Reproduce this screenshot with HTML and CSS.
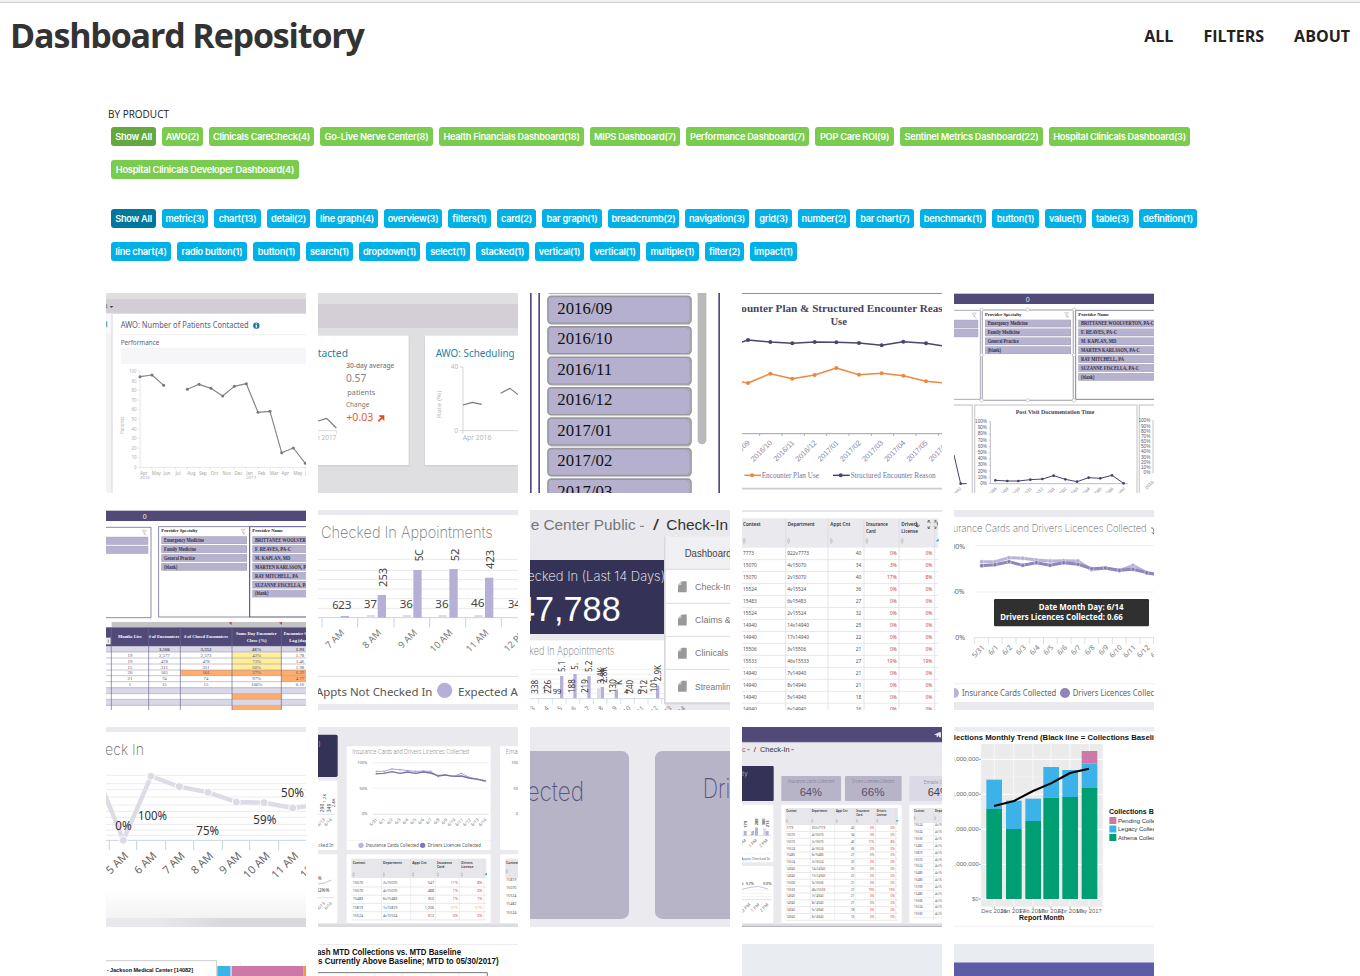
FILE: index.html
```html
<!DOCTYPE html>
<html lang="en">
<head>
<meta charset="utf-8">
<title>Dashboard Repository</title>
<link rel="stylesheet" href="styles.css">
</head>
<body>
<header class="site-header">
  <h1 class="site-title">Dashboard Repository</h1>
  <nav class="site-nav">
    <a class="nav-all">ALL</a>
    <a class="nav-filters">FILTERS</a>
    <a class="nav-about">ABOUT</a>
  </nav>
</header>
<main class="content">
  <h2 class="filter-heading">BY PRODUCT</h2>
  <div class="tags tags-product" id="products"></div>
  <div class="tags tags-component" id="components"></div>
  <section class="gallery" id="gallery"></section>
</main>
<script src="script.js"></script>
</body>
</html>
```

FILE: styles.css
```css
* { box-sizing: border-box; }
body {
  margin: 0;
  height: 976px;
  overflow: hidden;
  background: #fff;
  border-top: 2px solid #f1f1f1;
  font-family: "Open Sans", sans-serif;
  color: #333;
}
.site-header {
  display: flex;
  justify-content: space-between;
  align-items: center;
  height: 66px;
  padding: 0 10px 2px;
  border-top: 1px solid #cfcfcf;
}
.site-title {
  margin: 0;
  font-size: 34px;
  font-weight: 700;
  line-height: 46px;
  letter-spacing: -1.15px;
  color: #333;
}
.site-nav { display: flex; gap: 30px; padding-top: 2px; }
.site-nav a { font-size: 16px; font-weight: 700; line-height: 22px; color: #222; white-space: nowrap; }
.content { padding: 39px 0 0 106px; }
.filter-heading {
  margin: 0 0 6px 2px;
  font-size: 10px;
  line-height: 14px;
  font-weight: 400;
  color: #222;
}
.tags {
  display: flex;
  flex-wrap: wrap;
  gap: 14px 6px;
  width: 1100px;
  padding-left: 5px;
}
.tag {
  display: flex;
  justify-content: center;
  height: 19px;
  border-radius: 3px;
  font: 600 9.2px/19px Inter, sans-serif;
  letter-spacing: -0.24px;
  color: #fff;
  white-space: nowrap;
}
.tags-product .tag { background: #79cc4e; }
.tags-product .tag.active { background: #63a93f; }
.tags-component { margin-top: 30px; }
.tags-component .tag { background: #00b1e7; }
.tags-component .tag.active { background: #00789d; }
.gallery {
  display: grid;
  grid-template-columns: repeat(5, 200px);
  gap: 17px 12px;
  margin-top: 32px;
}
.thumb { display: block; width: 200px; height: 200px; }
.noto { font-family: "Noto Sans", sans-serif; }
.open { font-family: "Open Sans", sans-serif; }
.serif { font-family: "Liberation Serif", serif; }
.helv { font-family: "Liberation Sans", sans-serif; }
.thin { font-family: Inter, sans-serif; font-weight: 200; }
```

FILE: script.js
```js
const products = [
  ["Show All", 45], ["AWO(2)", 41], ["Clinicals CareCheck(4)", 105], ["Go-Live Nerve Center(8)", 113],
  ["Health Financials Dashboard(18)", 145], ["MIPS Dashboard(7)", 90], ["Performance Dashboard(7)", 123],
  ["POP Care ROI(9)", 79], ["Sentinel Metrics Dashboard(22)", 143], ["Hospital Clinicals Dashboard(3)", 141],
  ["Hospital Clinicals Developer Dashboard(4)", 188]
];
const components = [
  ["Show All", 45], ["metric(3)", 46], ["chart(13)", 47], ["detail(2)", 43], ["line graph(4)", 62], ["overview(3)", 58],
  ["filters(1)", 43], ["card(2)", 39], ["bar graph(1)", 60], ["breadcrumb(2)", 71], ["navigation(3)", 64], ["grid(3)", 37],
  ["number(2)", 52], ["bar chart(7)", 58], ["benchmark(1)", 66], ["button(1)", 47], ["value(1)", 41], ["table(3)", 41],
  ["definition(1)", 58], ["line chart(4)", 60], ["radio button(1)", 70], ["button(1)", 47], ["search(1)", 47],
  ["dropdown(1)", 61], ["select(1)", 44], ["stacked(1)", 53], ["vertical(1)", 49], ["vertical(1)", 50],
  ["multiple(1)", 53], ["filter(2)", 39], ["impact(1)", 47]
];
const tags = list => list.map(([label, width], i) =>
  `<a class="tag${i ? "" : " active"}" style="width:${width}px">${label}</a>`).join("");
document.getElementById("products").innerHTML = tags(products);
document.getElementById("components").innerHTML = tags(components);

/* SVG drawing helpers; every thumbnail uses 3 units per pixel */
const rect = (x, y, w, h, fill, extra = "") => `<rect x="${x}" y="${y}" width="${w}" height="${h}" fill="${fill}" ${extra}/>`;
const line = (pts, stroke, w = 3) => `<polyline points="${pts}" fill="none" stroke="${stroke}" stroke-width="${w}" stroke-linejoin="round"/>`;
const dots = (pts, r, fill, extra = "") => pts.split(" ").map(p => {
  const [x, y] = p.split(",");
  return `<circle cx="${x}" cy="${y}" r="${r}" fill="${fill}" ${extra}/>`;
}).join("");
const text = (x, y, s, size, fill, font, o = {}) =>
  `<text class="${font}" x="${x}" y="${y}" font-size="${size}" fill="${fill}"` +
  (o.b ? ` font-weight="${o.b}"` : "") +
  (o.w ? ` textLength="${o.w}" lengthAdjust="spacingAndGlyphs"` : "") +
  (o.a ? ` text-anchor="${o.a}"` : "") +
  (o.r ? ` transform="rotate(${o.r} ${x} ${y})"` : "") +
  `>${s.replace(/&/g, "&amp;")}</text>`;
const hlines = (x1, x2, ys, c, w = 2) => ys.map(y => line(`${x1},${y} ${x2},${y}`, c, w)).join("");
const vlines = (xs, y1, y2, c, w = 2) => xs.map(x => line(`${x},${y1} ${x},${y2}`, c, w)).join("");
const range = (n, f) => Array.from({ length: n }, (_, i) => f(i)).join("");
const thumb = (x, y, bg, body) =>
  `<svg class="thumb" viewBox="${x} ${y} 600 600">${rect(x, y, 600, 600, bg)}${body}</svg>`;

function patientsContacted() {
  const a = "120,275 156,270 191,301";
  const b = "262,313 297,298 333,310 368,333 403,304 439,296 474,382 510,379 545,503 580,489 616,535";
  const months = ["Apr", "May", "Jun", "Jul", "Aug", "Sep", "Oct", "Nov", "Dec", "Jan", "Feb", "Mar", "Apr", "May", "J"];
  return thumb(18, 24, "#fff",
    rect(18, 24, 600, 18, "#dfdfdf") + rect(18, 42, 600, 44, "#d3cdd6") +
    rect(18, 86, 17, 538, "#f3f2f5") + rect(18, 86, 17, 60, "#f8f8fa") + rect(34, 86, 4, 538, "#e0dfe3") +
    rect(18, 109, 4, 18, "#75a8c0") + rect(18, 58, 4, 12, "#99929f") +
    `<path d="M29 63h11l-5.500 6z" fill="#443f55"/>` +
    text(62, 130, "AWO: Number of Patients Contacted", 25, "#625d78", "noto", { w: 384 }) +
    `<circle cx="469" cy="122" r="9.500" fill="#24789c"/>` + rect(467, 120, 4, 8, "#fff") + rect(467, 115, 4, 3, "#fff") +
    hlines(62, 618, [149], "#e5e5e8", 2) + text(62, 179, "Performance", 21, "#625d78", "noto", { w: 116 }) +
    rect(62, 188, 556, 49, "#f6f6f8") + line("120,259 120,547 618,547", "#ddd", 2) +
    range(11, i => text(110, 552 - i * 28.8, String(i * 10), 13.5, "#b0b0b0", "noto", { a: "end" }) +
      line(`114,${547 - i * 28.8} 120,${547 - i * 28.8}`, "#ddd", 2)) +
    text(73, 447, "Patients", 13.5, "#aaa", "noto", { r: -90, w: 52 }) +
    months.map((m, i) => text(120 + i * 35.4, 570, m, 13.5, "#a5a5a5", "noto") + line(`${120 + i * 35.4},547 ${120 + i * 35.4},553`, "#ddd", 2)).join("") +
    text(120, 581, "2016", 13, "#a5a5a5", "noto", { w: 30 }) + text(439, 581, "2017", 13, "#a5a5a5", "noto", { w: 30 }) +
    line(a, "#85858a", 3.5) + line(b, "#85858a", 3.5) + dots(a + " " + b, 4.5, "#77777c"));
}

function awoCards() {
  return thumb(18, 24, "#dfdfe1",
    rect(18, 57, 600, 72, "#d4ced6") + rect(18, 155, 275, 389, "#d0d0d2") + rect(337, 155, 281, 389, "#d0d0d2") +
    rect(18, 152, 272, 388, "#fff") + rect(339, 152, 279, 388, "#fff") +
    text(17, 215, "tacted", 31, "#27819f", "noto", { w: 91 }) +
    text(103, 250, "30-day average", 20, "#77777b", "noto", { w: 144, b: 500 }) +
    text(102, 291, "0.57", 33, "#85858a", "noto", { w: 61 }) +
    text(106, 330, "patients", 21, "#77777b", "noto", { w: 84 }) +
    text(102, 366, "Change", 20, "#77777b", "noto", { w: 70 }) +
    text(103, 409, "+0.03", 32, "#e75d39", "noto", { w: 81 }) +
    line("199,409 213,395", "#d94e28", 5) + `<path d="M201 391h16v17l-6-5v-7h-8z" fill="#d94e28"/>` +
    line("18,408 44,400 73,429", "#77777b", 3.5) + line("18,437 74,437 74,446", "#d5d5d5", 2.5) +
    text(73, 466, "n 2017", 19.500, "#b5b5b7", "noto", { a: "end" }) +
    text(371, 215, "AWO: Scheduling", 31, "#27819f", "noto", { w: 237 }) +
    text(439, 252, "40", 20, "#b9b9bb", "noto", { a: "end" }) + text(438, 444, "0", 20, "#b9b9bb", "noto", { a: "end" }) +
    text(388, 400, "Rate (%)", 18.500, "#b9b9bb", "noto", { r: -90, w: 83 }) +
    line("443,246 453,246 453,446", "#d5d5d5") + line("443,437 618,437", "#d5d5d5") +
    text(452, 466, "Apr 2016", 19.500, "#b5b5b7", "noto", { w: 86 }) +
    line("453,360 481,352 509,358", "#77777b", 3.5) + line("566,325 594,310 618,329", "#77777b", 3.5));
}

function monthSlicer() {
  const m = ["2016/09", "2016/10", "2016/11", "2016/12", "2017/01", "2017/02", "2017/03"];
  return thumb(18, 24, "#fff",
    rect(18, 24, 5, 600, "#514a7d") + rect(43, 24, 5, 600, "#514a7d") + rect(583, 24, 5, 600, "#514a7d") +
    line("74,26 500,26", "#aaa", 3) +
    m.map((s, i) => rect(72, 34 + i * 91.4, 429, 81, "#b5b0ce", 'rx="10" stroke="#98979e" stroke-width="5"') +
      line(`80,${118 + i * 91.4} 498,${118 + i * 91.4}`, "#c8c8c8", 3) +
      `<path d="M488 ${37 + i * 91.4}l10 9v58l-9 9" fill="none" stroke="#aaa8ae" stroke-width="4"/>` +
      text(100, 87 + i * 91.4, s, 50, "#111", "serif", { w: 165 })).join("") +
    rect(521, 0, 26, 478, "#b9b9b9", 'rx="13"'));
}

function encounterPlan() {
  const p = "672,165 739,171 805,175 872,171 937,172 1005,174 1073,181 1138,170 1206,175";
  const o = "672,294 739,266 805,281 872,270 937,249 1005,269 1073,265 1138,272 1206,289";
  const d = ["2016/09", "2016/10", "2016/11", "2016/12", "2017/01", "2017/02", "2017/03", "2017/04", "2017/05", "2017/06"];
  return thumb(654, 24, "#fff",
    hlines(654, 1254, [25], "#77769b", 3) + hlines(654, 1254, [611], "#ccc", 5) +
    text(652, 80, "ounter Plan & Structured Encounter Reas", 33, "#454366", "serif", { b: 700, w: 604 }) +
    text(944, 119, "Use", 32, "#454366", "serif", { b: 700, a: "middle" }) +
    line("654,171 " + p + " 1254,182", "#49466f", 4.5) + dots(p, 6, "#49466f") +
    line("654,291 " + o + " 1254,293", "#ec8a43", 4.5) + dots(o, 6, "#ed873c") +
    line("654,446 1254,446", "#8e8d9f", 2.5) + range(9, i => line(`${707 + i * 67},446 ${707 + i * 67},453`, "#8e8d9f", 2)) +
    d.map((s, i) => text(679 + i * 66.7, 475, s, 22, "#8987a4", "helv", { r: -45, a: "end" })).join("") +
    line("661,571 711,571", "#ec8a43", 4.5) + dots("684,571", 6, "#ed873c") +
    text(713, 578, "Encounter Plan Use", 23.5, "#78769a", "serif", { w: 172 }) +
    line("927,571 977,571", "#49466f", 4.5) + dots("950,571", 6, "#49466f") +
    text(980, 578, "Structured Encounter Reason", 23.5, "#78769a", "serif", { w: 255 }));
}

/* A slicer panel: heading, filter glyph and a stack of option bars */
const itemWidths = {
  "Emergency Medicine": 120, "Family Medicine": 96, "General Practice": 93, "(blank)": 40,
  "BRITTANEE WOOLVERTON, PA-C": 219, "F. REAVES, PA-C": 108, "M. KAPLAN, MD": 106, "MARTEN KARLSSON, PA-C": 176,
  "RAY MITCHELL, PA": 129, "SUZANNE FISCELLA, PA-C": 174
};
function slicer(x, y, w, title, items, glyph) {
  return text(x, y, title, 15, "#222", "serif", { b: 700, w: title.length > 15 ? 109 : 92 }) +
    items.map((s, i) => rect(x, y + 12 + i * 26.7, w, 23, "#aaa7ba") + rect(x + 1, y + 13 + i * 26.7, w - 4, 20, "#b7b2d0") +
      text(x + 8, y + 29 + i * 26.7, s, 15.5, "#333049", "serif", { b: 700, w: itemWidths[s] })).join("") +
    (glyph ? `<path d="M${glyph} ${y - 9}h12l-5 6v6l-3-3v-3zM${glyph + 5} ${y}l8 7m0-7l-8 7" fill="none" stroke="#bb9ca6" stroke-width="1.500"/>` : "");
}
const specialties = ["Emergency Medicine", "Family Medicine", "General Practice", "(blank)"];
const providers = ["BRITTANEE WOOLVERTON, PA-C", "F. REAVES, PA-C", "M. KAPLAN, MD", "MARTEN KARLSSON, PA-C", "RAY MITCHELL, PA", "SUZANNE FISCELLA, PA-C", "(blank)"];

function postVisit() {
  const pts = "142,586 178,588 211,588 247,584 283,582 317,572 352,583 387,590 422,578 457,580 492,571 527,595";
  const sel = "101,74 239,74 378,74 101,346 239,346 378,346 101,210 378,210";
  const x = ["2016/08", "2016/09", "2016/10", "2016/11", "2016/12", "2017/01", "2017/02", "2017/03", "2017/04", "2017/05", "2017/06", "(blank)"];
  return thumb(18, 24, "#fff",
    rect(18, 26, 600, 31, "#514a78") + text(239, 51, "0", 21, "#e8e6f0", "helv", { a: "middle" }) +
    line("18,76 97,76 97,343 18,343", "#9a98b0", 2.5) + rect(18, 105, 72, 24, "#b7b2d0", 'stroke="#9d99b3"') + rect(18, 132, 72, 24, "#b7b2d0", 'stroke="#9d99b3"') +
    line("383,343 383,76 618,76", "#85829f", 3) + line("383,343 618,343", "#85829f", 3) +
    slicer(111, 92, 258, "Provider Specialty", specialties, 350) +
    slicer(391, 92, 240, "Provider Name", providers) +
    `<path d="M73 84h12l-5 6v6l-3-3v-3zM78 93l8 7" fill="none" stroke="#bb9ca6" stroke-width="1.500"/>` +
    rect(103, 75, 273, 271, "none", 'stroke="#b5b4bb" stroke-width="4"') + dots(sel, 5, "#fff", 'stroke="#bbb" stroke-width="2"') +
    line("18,360 73,360 73,624", "#d2d2d3", 4) + rect(80, 360, 487, 280, "#fff", 'stroke="#d2d2d3" stroke-width="4"') + line("618,360 574,360 574,624", "#d2d2d3", 4) +
    text(203, 387, "Post Visit Documentation Time", 19, "#464164", "serif", { b: 700, w: 236 }) +
    range(11, i => text(117, 600 - i * 18.6, i * 10 + "%", 14, "#595672", "helv", { a: "end" }) + line(`122,${596 - i * 18.6} 127,${596 - i * 18.6}`, "#aaa", 1.5) +
      text(607, 567 - i * 15.5, i * 10 + "%", 14, "#595672", "helv", { a: "end" })) +
    line("127,410 127,596 540,596", "#9a98ac", 2) + vlines([615], 405, 565, "#aaa") +
    line(pts, "#46416c", 3) + dots(pts, 4, "#46416c") + line("18,510 38,596 56,596", "#46416c", 3) + dots("38,596", 4, "#46416c") +
    x.map((s, i) => text(147 + i * 35, 612, s, 13, "#7f7d95", "helv", { r: -45, a: "end" })).join("") +
    text(40, 612, "(blank)", 13, "#7f7d95", "helv", { r: -45, a: "end" }) + text(618, 592, "2016", 14, "#8482a0", "helv", { r: -45, a: "end" }));
}

function encounterTable() {
  const rows = [["", "3,560", "3,552", "48%", "1.93"], ["19", "2,577", "2,573", "42%", "1.78"], ["19", "478", "478", "73%", "1.46"],
    ["15", "311", "311", "60%", "1.98"], ["20", "105", "101", "27%", "6.29"], ["21", "74", "74", "97%", "4.77"], ["1", "15", "15", "100%", "0.16"]];
  const cx = [90, 193, 318, 470, 600];
  return thumb(18, 21, "#fff",
    rect(18, 23, 600, 31, "#514a78") + text(134, 48, "0", 21, "#eee", "helv", { a: "middle" }) +
    line("18,73 153,73 153,344 18,344", "#77749a", 2.5) + rect(18, 102, 126, 23, "#b7b2d0", 'stroke="#9d99b3"') + rect(18, 129, 126, 23, "#b7b2d0", 'stroke="#9d99b3"') +
    `<path d="M127 82h12l-5 6v6l-3-3v-3zM132 91l8 7" fill="none" stroke="#bb9ca6" stroke-width="1.500"/>` +
    rect(176, 71, 273, 271, "none", 'stroke="#77749a" stroke-width="2.500"') + line("449,342 449,71 618,71", "#5d5887", 3) + line("449,342 618,342", "#5d5887", 3) +
    slicer(184, 88, 257, "Provider Specialty", specialties, 423) + slicer(457, 88, 180, "Provider Name", providers) +
    rect(35, 357, 583, 16, "#c3c3c3") + `<path d="M386 358h9v8zM537 358h9v8z" fill="#c9303c"/>` +
    rect(18, 373, 600, 56, "#514a78") + rect(18, 404, 14, 20, "#eee") + line("25,410 25,419", "#666", 2) +
    text(54, 406, "Months Live", 15, "#fff", "serif", { b: 700, w: 72 }) + text(146, 406, "# of Encounters", 15, "#fff", "serif", { b: 700, w: 92 }) +
    text(252, 406, "# of Closed Encounters", 15, "#fff", "serif", { b: 700, w: 132 }) + text(408, 397, "Same Day Encounter", 15, "#fff", "serif", { b: 700, w: 122 }) +
    text(440, 416, "Close (%)", 15, "#fff", "serif", { b: 700, w: 60 }) + text(551, 397, "Encounter Close", 15, "#fff", "serif", { b: 700, w: 92 }) + text(568, 416, "Lag (days)", 15, "#fff", "serif", { b: 700, w: 62 }) +
    rect(18, 430, 600, 17, "#dad8e7") + rect(18, 554, 600, 17, "#dad8e7") + rect(18, 590, 600, 17, "#dad8e7") +
    rect(396, 448, 148, 53, "#ffef9c") + rect(241, 501, 377, 17, "#ffad6d") + rect(544, 518, 74, 18, "#ffad6d") +
    rect(396, 572, 148, 17, "#ffad6d") + rect(396, 608, 148, 13, "#ffad6d") +
    hlines(18, 618, [430, 447, 465, 483, 501, 518, 536, 554, 572, 589, 607], "#8a88ae", 1.5) +
    vlines([34, 146, 241, 396, 544], 373, 621, "#6a6691", 2) +
    rows.map((r, i) => r.map((s, j) => text(cx[j], 444 + i * 17.5, s, 14.5, "#55526e", "serif", { a: "middle", b: i ? 400 : 700 })).join("")).join(""));
}

function checkedIn() {
  const bars = [[86, 339, 0], [197, 276, 165], [304, 201, 273], [412, 198, 380], [519, 224, 487]];
  return thumb(18, 21, "#fff",
    rect(18, 21, 600, 15, "#eae9ef") + rect(18, 603, 600, 18, "#eae9ef") + hlines(18, 618, [520], "#ddd", 3) +
    text(27, 106, "Checked In Appointments", 48, "#777", "thin", { w: 515 }) +
    hlines(18, 618, [169, 202, 230, 258, 287, 316], "#e9e9ec", 3) + hlines(18, 618, [344], "#c7d5e5", 3) + vlines([30, 137, 246, 353, 461, 568], 344, 373, "#c7d5e5", 3) +
    bars.map(([x, y, g]) => rect(x, y, 25, 344 - y, "#b7b0d6") + (g ? rect(g, 336, 24, 8, "#dddce5") : "")).join("") +
    text(61, 319, "6", 33, "#444", "noto") + text(78, 319, "23", 33, "#444", "noto", { w: 41 }) + text(156, 315, "37", 33, "#444", "noto", { w: 39 }) + text(263, 315, "36", 33, "#444", "noto", { w: 40 }) +
    text(370, 315, "36", 33, "#444", "noto", { w: 40 }) + text(477, 313, "46", 33, "#444", "noto", { w: 41 }) + text(588, 315, "34", 33, "#444", "noto") +
    text(226, 252, "253", 34, "#444", "noto", { r: -90, w: 58 }) + text(332, 175, "5C", 34, "#444", "noto", { r: -90, w: 36 }) +
    text(440, 175, "52", 34, "#444", "noto", { r: -90, w: 38 }) + text(547, 198, "423", 34, "#444", "noto", { r: -90, w: 58 }) +
    ["7 AM", "8 AM", "9 AM", "10 AM", "11 AM", "12 PM"].map((s, i) => text([99, 210, 317, 424, 532, 645][i], 391, s, 28, "#777", "noto", { r: -45, a: "end" })).join("") +
    text(12, 578, "Appts Not Checked In", 35, "#555", "noto", { w: 349 }) + dots("398,562", 23, "#b7b0d6") + text(438, 578, "Expected A", 35, "#555", "noto", { w: 180 }));
}

function centerMenu() {
  const up = [[677, 572, "338"], [716, 572, "226"], [789, 570, "188"], [829, 570, "219"], [875, 542, "3.4K"], [884, 540, "2.8K"], [912, 570, "130"], [930, 546, "K"], [963, 572, "240"], [1005, 572, "212"], [1034, 568, "101"], [1048, 535, "2.9K"], [759, 507, "5.1"], [799, 500, "5."], [839, 507, "5.2"]];
  const bars = [[744, 519], [784, 513], [826, 519], [866, 552], [908, 560], [1032, 548]];
  return thumb(654, 21, "#eae9ee",
    rect(654, 412, 406, 230, "#fff") + rect(654, 171, 407, 222, "#343256") +
    text(656, 82, "e Center Public", 44, "#777", "helv", { w: 315 }) + line("984,70 996,70", "#777", 3) +
    text(1023, 82, "/", 44, "#333", "helv", { w: 18 }) + text(1063, 82, "Check-In", 44, "#333", "helv", { w: 185 }) +
    text(646, 235, "ecked In (Last 14 Days)", 41, "#fff", "thin", { w: 413 }) +
    text(612, 354, "47,788", 105, "#fff", "helv", { w: 314 }) +
    text(652, 457, "ked In Appointments", 34, "#777", "thin", { w: 255 }) +
    hlines(654, 1060, [500, 514, 528, 542, 558, 572], "#e9e9ec", 2) + hlines(654, 1060, [587], "#c7d5e5", 2.5) + range(10, i => line(`${680 + i * 41},587 ${680 + i * 41},604`, "#c7d5e5", 2)) +
    bars.map(([x, y]) => rect(x, y, 10, 586 - y, "#b7b0d6")).join("") + rect(855, 556, 10, 30, "#dcdbe7") +
    up.map(([x, y, s]) => text(x, y, s, 24, "#333", "noto", { r: -90 })).join("") + text(722, 572, "99", 23, "#333", "noto") +
    text(690, 566, "1", 23, "#333", "noto") + text(936, 572, "4", 23, "#333", "noto") + text(976, 572, "6", 23, "#333", "noto") +
    range(12, i => text(670 + i * 41, 617, String(i + 3), 19, "#777", "noto", { r: -45, a: "end" })) +
    rect(1056, 101, 198, 503, "#d7d6db") + rect(1061, 101, 200, 498, "#fff") + `<path d="M1079 102l13-13 13 13z" fill="#f0eff2" stroke="#d7d6db" stroke-width="2"/>` + rect(1061, 101, 200, 98, "#f0eff1") +
    hlines(1061, 1254, [199, 301, 400, 499, 599], "#dddde0", 3) +
    text(1118, 161, "Dashboards", 30, "#444", "helv", { w: 155 }) +
    ["Check-In", "Claims & D", "Clinicals", "Streamline"].map((s, i) => {
      const y = 235 + i * 99.5;
      return `<path d="M1110 ${y}h14v33h-26v-20z" fill="#999"/><path d="M1108 ${y}v11h-11z" fill="#ccc"/>` +
        text(1149, y + 26, s, 28, "#777", "helv", { w: [107, 134, 100, 121][i] });
    }).join(""));
}

const ids = ["7773", "15070", "15070", "15524", "15483", "15524", "14940", "14940", "15506", "15533", "14940", "14940", "14940", "14940"];
const depts = ["922v7773", "4v15070", "2v15070", "4v15524", "6v15483", "2v15524", "14v14940", "17v14940", "3v15506", "46v15533", "7v14940", "8v14940", "5v14940", "6v14940"];
const counts = [40, 34, 40, 36, 27, 32, 25, 22, 21, 27, 21, 21, 18, 16];
const insured = ["0%", "3%", "17%", "0%", "0%", "0%", "0%", "0%", "0%", "19%", "0%", "0%", "0%", "0%"];
const licensed = ["0%", "0%", "8%", "0%", "0%", "0%", "0%", "0%", "0%", "19%", "0%", "0%", "0%", "0%"];

/* Department table: cols = [context, department, count right, insurance right, license right] */
function deptTable(y0, step, size, cols, n, x1, x2, data) {
  const [a, b, c, d, e] = data || [ids, depts, counts, insured, licensed];
  return range(n, i => {
    const y = y0 + i * step;
    return text(cols[0], y, a[i], size, "#555", "noto") + text(cols[1], y, b[i], size, "#555", "noto") +
      text(cols[2], y, String(c[i]), size, "#555", "noto", { a: "end" }) +
      text(cols[3], y, d[i], size, data && i === 3 ? "#eab54d" : "#cf3d3d", "noto", { a: "end" }) +
      text(cols[4], y, e[i], size, data && i === 3 ? "#eab54d" : "#cf3d3d", "noto", { a: "end" }) +
      line(`${x1},${y + step * 0.36} ${x2},${y + step * 0.36}`, "#dedee0", 2);
  });
}
const sorters = (xs, y, s) => xs.map(x => `<path d="M${x} ${y - 1}l${s / 2}-${s} ${s / 2} ${s}zM${x} ${y + 2}l${s / 2} ${s} ${s / 2}-${s}z" fill="none" stroke="#aaa" stroke-width="1.300"/>`).join("");

function departmentGrid() {
  const h = (x, y, s, w) => text(x, y, s, 14.5, "#333", "noto", { b: 600, w });
  return thumb(18, 21, "#fff",
    rect(18, 21, 600, 6, "#e6e5ec") + rect(18, 46, 589, 88, "#eae9ee") +
    h(21, 69, "Context", 53) + h(155, 69, "Department", 81) + h(283, 69, "Appt Cnt", 60) + h(390, 69, "Insurance", 66) + h(390, 89, "Card", 29) +
    h(496, 69, "Drivers", 50) + h(496, 89, "License", 50) + sorters([21, 154, 282, 389, 495], 113, 7) +
    `<path d="M541 56v13m-5-4l7 7 8-5" fill="none" stroke="#555" stroke-width="3"/>` +
    `<path d="M576 59v-6h6M576 53l8 7M594 53h6v6M600 53l-7 7M576 70v6h6M576 76l7-6M600 70v6h-6M600 76l-7-6M604 58v9" fill="none" stroke="#555" stroke-width="2.500"/>` +
    `<path d="M599 115l9-8v8z" fill="#1798d5"/>` +
    vlines([149, 276, 384, 489, 596], 46, 621, "#d8d8dc", 2) +
    deptTable(157, 35.9, 14.5, [21, 154, 376, 482, 589], 14, 18, 607));
}

function licences() {
  const a = "737,176 777,176 819,164 860,166 901,171 942,174 983,173 1026,174 1067,200 1108,195 1150,203 1191,187 1232,209";
  const b = "737,188 777,185 819,176 860,187 901,179 942,187 983,179 1026,184 1067,197 1108,195 1150,202 1191,199 1232,209";
  const x = ["5/31", "6/1", "6/2", "6/3", "6/4", "6/5", "6/6", "6/7", "6/8", "6/9", "6/10", "6/11", "6/12", "6/13"];
  return thumb(654, 21, "#fff",
    rect(654, 21, 600, 21, "#eae9ee") + rect(654, 597, 600, 24, "#eae9ee") +
    text(650, 87, "urance Cards and Drivers Licences Collected", 32, "#666", "thin", { w: 582 }) +
    `<path d="M1246 75c7 0 8 5 8 18m-6-5l7 7" fill="none" stroke="#555" stroke-width="3"/>` +
    hlines(718, 1254, [128, 267], "#e7e7e9") + hlines(714, 1254, [404], "#c7d5df") + range(14, i => line(`${716 + i * 41.3},404 ${716 + i * 41.3},423`, "#c7d5df", 2)) +
    text(687, 137, "100%", 21, "#666", "noto", { a: "end" }) + text(686, 274, "50%", 21, "#666", "noto", { a: "end" }) + text(687, 411, "0%", 21, "#666", "noto", { a: "end" }) +
    line(a + " 1254,213", "#bbb3d9", 9) + dots(a, 6, "#b3abd2", 'stroke="#eeeaf6" stroke-width="1.500"') +
    line(b + " 1254,213", "#9185bd", 9) + dots(b, 6, "#8477b3", 'stroke="#eeeaf6" stroke-width="1.500"') +
    rect(774, 288, 465, 82, "#303030", 'rx="4"') + text(908, 320, "Date Month Day: 6/14", 24, "#fff", "noto", { b: 700, w: 255 }) +
    text(793, 351, "Drivers Licences Collected: 0.66", 24, "#fff", "noto", { b: 700, w: 367 }) +
    x.map((s, i) => text(747 + i * 41.3, 435, s, 21, "#777", "noto", { r: -45, a: "end" })).join("") +
    hlines(654, 1254, [542], "#e5e5e7") + dots("654,570", 15, "#bbb3d9") + dots("987,570", 15, "#8f85b9") +
    text(678, 580, "Insurance Cards Collected", 25, "#666", "noto", { w: 283 }) + text(1010, 580, "Drivers Licences Collected", 25, "#666", "noto", { w: 280 }));
}

function checkInLine() {
  const p = "70,361 153,169 238,200 324,217 409,246 492,248 578,264";
  return thumb(18, 21, "#fff",
    `<defs><linearGradient id="fade" x2="0" y2="1"><stop offset="0" stop-color="#fff"/><stop offset="1" stop-color="#f3f3f4"/></linearGradient><linearGradient id="strip"><stop offset=".25" stop-color="#e9e8ed"/><stop offset=".6" stop-color="#d9d8dd"/></linearGradient></defs>` +
    rect(18, 21, 600, 15, "#eae9ee") + rect(18, 510, 600, 84, "url(#fade)") + rect(18, 594, 600, 27, "url(#strip)") +
    text(15, 104, "eck In", 45, "#666", "thin", { w: 117 }) +
    hlines(18, 618, [166, 191, 209, 231, 255, 274, 292, 313, 330, 346], "#e3e3e5", 2) + hlines(18, 618, [361], "#c7d5df", 3) + vlines([28, 110, 197, 281, 367, 449, 536], 361, 390, "#c7d5df", 3) +
    line("5,200 " + p + " 618,259", "#dddbe6", 13) + dots(p, 12, "#dcdae5", 'stroke="#fff" stroke-width="3"') +
    [[46, 329, "0%", 49], [114, 299, "100%", 87], [289, 346, "75%", 68], [460, 313, "59%", 69], [543, 231, "50%", 69]].map(([x, y, s, w]) => text(x, y, s, 37, "#333", "noto", { w })).join("") +
    ["5 AM", "6 AM", "7 AM", "8 AM", "9 AM", "10 AM", "11 AM", "12 PM"].map((s, i) => text(87 + i * 85, 409, s, 33, "#666", "noto", { r: -45, a: "end" })).join(""));
}

function collectedOverview() {
  const a = "829,154 852,154 876,147 900,149 923,152 946,154 970,153 992,154 1014,170 1036,165 1061,169 1084,160 1107,172 1132,177 1156,182";
  const b = "829,161 852,160 876,155 900,160 923,156 946,160 970,156 992,159 1014,167 1036,165 1061,169 1084,168 1107,174 1132,178 1156,183";
  const x = ["5/31", "6/1", "6/2", "6/3", "6/4", "6/5", "6/6", "6/7", "6/8", "6/9", "6/10", "6/11", "6/12", "6/13", "6/14"];
  const h = (x, y, s, w) => text(x, y, s, 11, "#333", "noto", { b: 600, w });
  const data = [["15070", "15070", "15483", "15819", "15524"], ["2v15070", "4v15070", "6v15483", "1v15819", "4v15524"], ["547", "488", "350", "1,206", "312"], ["11%", "1%", "1%", "51%", "0%"], ["8%", "0%", "1%", "57%", "0%"]];
  return thumb(654, 21, "#eae9ee",
    rect(640, 44, 73, 127, "#343256", 'rx="5"') + text(659, 78, ")", 20, "#eee", "thin", { a: "middle" }) +
    rect(640, 182, 72, 208, "#fff", 'rx="4"') + rect(640, 403, 72, 206, "#fff", 'rx="4"') +
    rect(740, 79, 432, 311, "#fff", 'rx="4"') + rect(740, 403, 432, 206, "#fff", 'rx="4"') +
    rect(1200, 79, 60, 311, "#fff", 'rx="4"') + rect(1200, 403, 60, 206, "#fff", 'rx="4"') +
    text(757, 103, "Insurance Cards and Drivers Licences Collected", 19, "#555", "thin", { w: 350 }) + text(1217, 103, "Email", 18, "#555", "thin") +
    hlines(818, 1166, [128, 205], "#ececee") + hlines(818, 1166, [283], "#ccd7e0") +
    ["100%", "50%", "0%"].map((s, i) => text(802, 132 + i * 77, s, 12, "#666", "noto", { a: "end" }) + text(1264, 132 + i * 77, s, 12, "#666", "noto", { a: "end" })).join("") +
    line(a, "#aaa1cc", 3) + line(b, "#7b6fa9", 4) + dots(a, 2.5, "#aaa1cc") + dots(b, 2.5, "#8c81b7") +
    x.map((s, i) => text(833 + i * 23.4, 300, s, 13, "#777", "noto", { r: -45, a: "end" })).join("") +
    hlines(740, 1172, [361], "#eee") + dots("783,376", 8, "#bbb3d9") + dots("968,376", 8, "#8477b3") +
    text(797, 381, "Insurance Cards Collected", 14.5, "#555", "noto", { w: 160 }) + text(983, 381, "Drivers Licences Collected", 14.5, "#555", "noto", { w: 160 }) +
    text(673, 277, "290", 15, "#444", "noto", { r: -90 }) + text(677, 248, "1.2K", 13, "#444", "noto", { r: -90 }) + text(694, 277, "349", 15, "#444", "noto", { r: -90 }) + text(704, 262, "2.4K", 13, "#444", "noto", { r: -90 }) +
    hlines(654, 702, [283, 533], "#ccd7e0") + text(676, 300, "6/13", 13, "#777", "noto", { r: -45, a: "end" }) + text(697, 300, "6/14", 13, "#777", "noto", { r: -45, a: "end" }) +
    text(676, 551, "6/13", 13, "#777", "noto", { r: -45, a: "end" }) + text(697, 551, "6/14", 13, "#777", "noto", { r: -45, a: "end" }) +
    text(701, 381, "cked In", 13.5, "#666", "noto", { a: "end" }) + text(665, 479, "%", 14, "#444", "noto", { a: "end" }) + text(688, 515, "62%%", 14, "#444", "noto", { a: "end" }) + line("654,492 673,489 694,480", "#c8c4da", 3) +
    rect(754, 416, 405, 58, "#e7e6ea") + rect(1216, 416, 44, 58, "#e7e6ea") +
    h(758, 431, "Context", 38) + h(849, 431, "Department", 57) + h(937, 431, "Appt Cnt", 43) + h(1011, 431, "Insurance", 45) + h(1011, 445, "Card", 22) + h(1084, 431, "Drivers", 34) + h(1084, 445, "License", 36) + h(1218, 431, "Context", 38) +
    sorters([758, 849, 937, 1011, 1083], 463, 5) + sorters([1218], 453, 5) + `<path d="M1153 464l8-6v6z" fill="#1798d5"/>` + vlines([845, 932, 1006, 1078, 1152], 416, 600, "#dedee0", 1.5) +
    deptTable(492, 24.7, 11, [758, 849, 1002, 1074, 1147], 5, 754, 1159, data) +
    ["15819", "15070", "15524", "15482", "15524"].map((s, i) => text(1218, 482 + i * 24.7, s, 11, "#555", "noto")).join("") +
    rect(654, 612, 600, 9, "#dcdbe0"));
}

function collectedTiles() {
  return thumb(18, 21, "#ebeaef",
    rect(-60, 93, 375, 504, "#b8b4c8", 'rx="22"') + rect(393, 93, 300, 504, "#b8b4c8", 'rx="22"') +
    text(8, 242, "ected", 82, "#5b567e", "thin", { w: 172, b: 300 }) + text(536, 233, "Driv", 79, "#5b567e", "thin", { w: 118, b: 300 }));
}

function checkInDashboard() {
  const h = (x, y, s, w) => text(x, y, s, 9, "#333", "noto", { b: 600, w });
  const right = ["15524", "15524", "15533", "15482", "15819", "15070", "15524", "15483", "15483", "15709", "15483", "15506", "15524", "15533"];
  return thumb(654, 21, "#eae9ee",
    rect(654, 21, 600, 46, "#514a78") + hlines(654, 1254, [67], "#c8c5d6", 2) + `<path d="M1230 44l15-7h6v15h-6v-5h-3v4h-4v-5z" fill="#e5e1f1"/>` +
    text(665, 95, "c", 22, "#777", "helv", { a: "end" }) + line("670,89 677,89", "#777") + text(689, 96, "/", 24, "#333", "helv") + text(708, 96, "Check-In", 24, "#333", "helv", { w: 89 }) + line("802,89 809,89", "#333", 2) +
    rect(640, 138, 109, 105, "#343256", 'rx="3"') + text(671, 169, "ity", 19, "#eee", "thin", { a: "end" }) +
    rect(640, 254, 108, 173, "#fff", 'rx="4"') + rect(640, 438, 108, 171, "#fff", 'rx="4"') +
    rect(772, 168, 179, 75, "#b8b4c8", 'rx="3"') + rect(963, 168, 170, 75, "#b8b4c8", 'rx="3"') + rect(1156, 168, 110, 75, "#dbd9e5", 'rx="3"') +
    text(791, 190, "Insurance Cards Collected", 14, "#5d5976", "thin", { w: 140 }) + text(984, 189, "Drivers Licenses Collected", 13, "#5d5976", "thin", { w: 127 }) + text(1199, 191, "Emails Coll", 15, "#555", "thin") +
    text(827, 228, "64%", 35, "#57516f", "helv", { w: 67 }) + text(1012, 228, "66%", 35, "#57516f", "helv", { w: 70 }) + text(1211, 228, "64%", 34, "#444", "helv", { w: 67 }) +
    rect(772, 254, 361, 355, "#fff", 'rx="3"') + rect(1156, 254, 110, 355, "#fff", 'rx="3"') + rect(784, 264, 338, 51, "#e7e6ea") + rect(1169, 264, 90, 45, "#e7e6ea") +
    h(787, 277, "Context", 31) + h(863, 277, "Department", 47) + h(936, 277, "Appt Cnt", 35) + h(997, 277, "Insurance", 39) + h(997, 289, "Card", 18) + h(1058, 277, "Drivers", 28) + h(1058, 289, "License", 30) + h(1170, 277, "Context", 31) + h(1233, 277, "Depart", 28) +
    sorters([787, 863, 936, 997, 1058], 302, 4) + sorters([1170, 1232], 294, 4) + rect(1116, 301, 7, 3, "#1798d5") + vlines([859, 932, 993, 1054, 1115], 264, 600, "#dedee0", 1.5) + vlines([1229], 264, 600, "#dedee0", 1.5) +
    deptTable(327, 20.5, 9, [787, 863, 991, 1051, 1112], 14, 784, 1122) +
    right.map((s, i) => text(1170, 319 + i * 20.5, s, 9, "#555", "noto") + text(1233, 319 + i * 20.5, "4v" + s, 9, "#555", "noto") + line(`1169,${327 + i * 20.5} 1254,${327 + i * 20.5}`, "#dedee0", 1.5)).join("") +
    rect(659, 333, 9, 14, "#b7b0d6") + rect(693, 323, 9, 24, "#b7b0d6") + rect(717, 325, 9, 22, "#dedce8") + rect(725, 333, 9, 14, "#b7b0d6") +
    text(669, 323, "179", 12, "#333", "noto", { r: -90, b: 600 }) + text(702, 316, "288", 12, "#333", "noto", { r: -90, b: 600 }) + text(724, 316, "300", 12, "#333", "noto", { r: -90, b: 600 }) + text(735, 322, "213", 12, "#333", "noto", { r: -90, b: 600 }) + text(690, 346, "56", 12, "#333", "noto", { r: -90 }) +
    hlines(654, 743, [347, 539], "#cbd6e0", 2) + hlines(654, 743, [400, 510, 520, 530], "#e9e9eb", 1.5) +
    ["12 PM", "1 PM", "2 PM"].map((s, i) => text(668 + i * 32, 362, s, 13, "#777", "noto", { r: -45, a: "end" }) + text(680 + i * 27, 555, s, 13, "#777", "noto", { r: -45, a: "end" })).join("") +
    text(739, 420, "Appts Checked In", 13, "#666", "noto", { a: "end", w: 88 }) + text(659, 496, "%", 13, "#333", "noto", { a: "end" }) + text(665, 494, "57%", 13, "#333", "noto") + text(717, 496, "53%", 13, "#333", "noto") + line("654,508 675,503 703,499 732,507", "#cac6dc", 3) +
    rect(654, 612, 600, 6, "#dcdbe0") + rect(654, 618, 600, 3, "#b9b8be"));
}

function collectionsTrend() {
  const bars = [[115, 179, 267, 537], [174, 242, 327, 537], [232, 236, 303, 537], [286, 141, 233, 537], [343, 150, 231, 537], [401, 130, 204, 537]];
  return thumb(18, 21, "#fff",
    rect(18, 21, 600, 14, "#e9edf2") + text(11, 59, "llections Monthly Trend (Black line = Collections Baseline", 22.5, "#111", "helv", { b: 700, w: 634 }) +
    rect(99, 72, 365, 488, "#ebebeb") + hlines(99, 464, [118, 223, 328, 433, 537], "#fff", 3) + hlines(99, 464, [171, 276, 380, 485], "#f5f5f5", 2) + vlines([139, 197, 255, 309, 366, 424], 72, 560, "#f8f8f8", 3) +
    [118, 223, 328, 433].map((y, i) => text(92, y + 6, `${4 - i},000,000`, 17, "#666", "helv", { a: "end", w: 83 }) + line(`93,${y} 99,${y}`, "#777", 2)).join("") + text(91, 543, "$0", 17, "#777", "helv", { a: "end" }) + line("93,537 99,537", "#777", 2) +
    bars.map(([x, a, b, c]) => rect(x, a, 47, b - a, "#3bb3e8") + rect(x, b, 47, c - b, "#009e73")).join("") + rect(401, 93, 47, 37, "#cc79a7") +
    line("138,258 198,243 255,213 309,190 366,159 423,146", "#000", 6) + vlines([139, 197, 255, 309, 366, 424], 560, 566, "#777", 2) +
    ["Dec 2016", "Jan 2017", "Feb 2017", "Mar 2017", "Apr 2017", "May 2017"].map((s, i) => text(138 + i * 57, 579, s, 17, "#666", "helv", { a: "middle", w: 76 })).join("") +
    text(213, 601, "Report Month", 20, "#111", "helv", { b: 700, w: 136 }) + text(483, 281, "Collections Bu", 21, "#111", "helv", { b: 700 }) +
    [["#cc79a7", "Pending Collec"], ["#3bb3e8", "Legacy Collec"], ["#009e73", "Athena Collect"]].map(([c, s], i) => rect(484, 291 + i * 25.5, 21, 21, c) + text(510, 308 + i * 25.5, s, 18, "#333", "helv")).join("") +
    hlines(18, 618, [619], "#eaeaf2"));
}

function jacksonBar() {
  return thumb(18, 672, "#fff",
    line("18,722 350,722 350,790", "#ccc", 3) + text(20, 757, "- Jackson Medical Center [14082]", 18, "#111", "helv", { b: 700, w: 259 }) +
    vlines([421, 605], 725, 738, "#eee") + rect(352, 738, 40, 62, "#3bb3e8") + rect(392, 738, 3, 62, "#e3e3ef") + rect(395, 738, 216, 62, "#cc79a7") + rect(611, 738, 7, 62, "#f09a3c"));
}

function mtdCollections() {
  return thumb(654, 672, "#fff",
    hlines(654, 1254, [673], "#ddd", 2) + text(651, 705, "ash MTD Collections vs. MTD Baseline", 25, "#111", "helv", { b: 700, w: 432 }) +
    text(654, 731, "s Currently Above Baseline; MTD to 05/30/2017)", 25, "#111", "helv", { b: 700, w: 542 }) +
    line("654,758 1162,758 1162,800", "#777", 3) + vlines([740, 824, 907, 992, 1076], 760, 800, "#e5e5e5"));
}

document.getElementById("gallery").innerHTML = [
  patientsContacted(), awoCards(), monthSlicer(), encounterPlan(), postVisit(),
  encounterTable(), checkedIn(), centerMenu(), departmentGrid(), licences(),
  checkInLine(), collectedOverview(), collectedTiles(), checkInDashboard(), collectionsTrend(),
  jacksonBar(), mtdCollections(), thumb(18, 672, "#fff", ""), thumb(654, 672, "#e9edf2", ""),
  thumb(18, 672, "#e9edf2", rect(18, 726, 600, 3, "#a5a4cb") + rect(18, 729, 600, 600, "#5c5da5"))
].join("");
```
